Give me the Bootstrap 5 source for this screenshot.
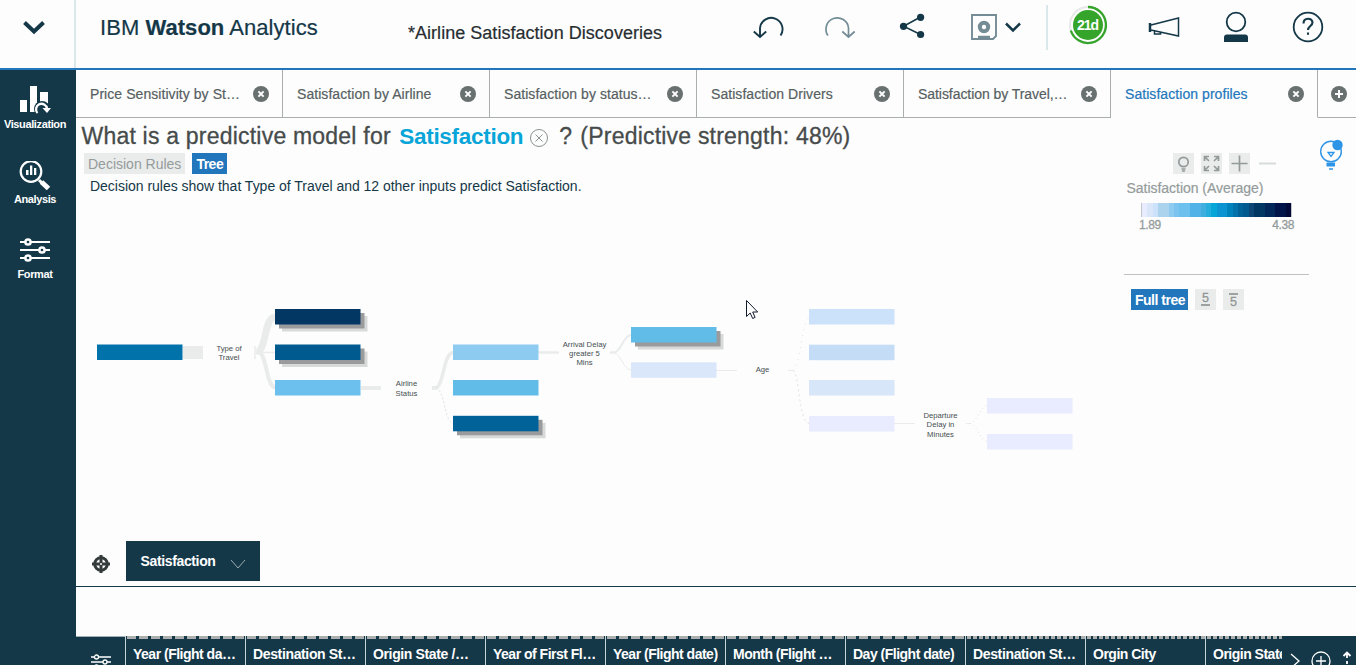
<!DOCTYPE html>
<html lang="en">
<head>
<meta charset="utf-8">
<meta name="viewport" content="width=device-width, initial-scale=1">
<title>IBM Watson Analytics</title>
<link rel="stylesheet" href="https://cdn.jsdelivr.net/npm/bootstrap@5.3.0/dist/css/bootstrap.min.css">
<style>
  :root { --navy:#153848; --blue:#2276bc; --paper:#fdfdfd; --soft:#eaeceb; --mute:#949b9b; }
  body { font-family:"Liberation Sans",Arial,sans-serif; background:var(--paper); color:var(--navy); width:1356px; height:665px; line-height:1; }
  svg { display:block; flex:none; }
  span, h1, p { white-space:pre; }
  .topbar { height:70px; border-bottom:2px solid #2276bc; }
  .toggle { width:76px; border-right:2px solid #dae7e8; }
  .brand { font-size:22px; padding:17px 0 0 24px; width:332px; letter-spacing:.05px; -webkit-text-stroke:.2px; }
  .docname { font-size:18px; color:#272d31; padding-top:24px; width:345px; letter-spacing:.03px; -webkit-text-stroke:.2px; }
  .side { width:76px; background:var(--navy); color:#fff; }
  .side a { height:75px; width:70px; color:#fff; font-size:11px; font-weight:700; letter-spacing:-.38px; text-decoration:none; }
  .side span { margin-top:3px; }
  .tabs { height:48px; }
  .tab { width:207px; border-right:1px solid #a9adad; border-bottom:1px solid #a9adad; padding:0 13px 0 14px; font-size:14px; letter-spacing:.06px; color:#575f62; -webkit-text-stroke:.2px; }
  .tab.on { color:var(--blue); border-bottom-color:transparent; }
  .tabadd { border-bottom:1px solid #a9adad; padding-left:13px; }
  .stage { height:469px; border-bottom:1px solid var(--navy); }
  .heading { font-size:23px; color:#464b4b; margin:0; height:35px; padding:5px 0 0 5.5px; letter-spacing:.21px; -webkit-text-stroke:.3px; }
  .target { color:#08a5d8; font-weight:700; font-size:22.5px; letter-spacing:-.29px; margin-left:8.500px; -webkit-text-stroke:0; }
  .chip { height:21px; background:var(--soft); color:var(--mute); font-size:14px; }
  .chip.on { background:var(--blue); color:#fff; font-weight:700; letter-spacing:-.5px; }
  .summary { font-size:14px; height:14px; margin:5px 0 0 14px; letter-spacing:-.02px; }
  .leftcol { width:1048px; }
  .legend { width:185px; padding-top:35px; }
  .cap { font-size:14px; color:var(--mute); margin:7px 0 7px 2.500px; height:15px; line-height:15px; letter-spacing:-.03px; -webkit-text-stroke:.2px; }
  .ramp { width:151px; height:14px; margin-left:17px; border:0 solid #c3c6c8; border-width:0 1px; }
  .ramp i { flex:1; }
  .ends { font-size:12px; color:var(--mute); margin:2px 15px 0 15px; letter-spacing:-.4px; -webkit-text-stroke:.3px; }
  .rule { border-top:1px solid #bfc2c2; margin-top:43px; }
  .fit { background:var(--navy); color:#fff; width:134px; height:40px; font-size:14px; font-weight:700; padding:0 14px 0 14.5px; letter-spacing:-.36px; }
  .tree { margin-top:97px; }
  .tree text { font-size:7.700px; fill:#464f50; text-anchor:middle; }
  .tray { background:var(--navy); height:29px; margin-top:49px; overflow:hidden; color:#fff; }
  .cfg { width:49px; padding:17px 0 0 15px; border-top:1px solid #9fb0b6; }
  .cols { width:1157px; }
  .dcol { width:120px; flex:none; border-left:1px solid #c7d4d8; font-size:14px; letter-spacing:-.5px; font-weight:700; padding-left:7px; line-height:37px; background:repeating-linear-gradient(90deg,#acafae 0 9px,transparent 9px 12px) 1px 0/118px 3px no-repeat; }
  .dcol.loose { letter-spacing:-.36px; }
  .dcol.fine { background-image:repeating-linear-gradient(90deg,#acafae 0 4px,transparent 4px 6px); }
  .pointer { position:absolute; left:746px; top:300px; }
</style>
</head>
<body class="d-flex flex-column overflow-hidden position-relative">
<header class="topbar d-flex flex-shrink-0">
  <div class="toggle"><svg width="74" height="68" fill="none" stroke="#153848" stroke-width="4"><path d="M24.500 22.500 34 31.500 43.500 22.500"/></svg></div>
  <div class="brand"><span>IBM <b>Watson</b> Analytics</span></div>
  <div class="docname"><span>*Airline Satisfaction Discoveries</span></div>
  <svg width="603" height="68" viewBox="753 0 603 68" fill="none" stroke="#153848" stroke-width="1.900">
    <path d="M760 36.500V28A11.300 11.300 0 1 1 780.600 35.500M753.800 31.500l6.200 5.500 6.200-5.500"/>
    <path stroke="#748c96" stroke-width="1.700" d="M848.500 36.500V28A11.300 11.300 0 1 0 827.900 35.500M842.300 31.500l6.200 5.500 6.200-5.500"/>
    <path stroke-width="1.500" d="M920.500 17 903.500 26.300 920.500 34.500"/><g fill="#153848" stroke="none"><circle cx="920.600" cy="17.300" r="3.600"/><circle cx="903.500" cy="26.300" r="3.600"/><circle cx="920.600" cy="34.500" r="3.600"/></g>
    <path stroke="#748c96" d="M972 15h24v21l-3 3h-21z"/><circle cx="984" cy="27" r="4.200" stroke="#748c96" stroke-width="4"/><path stroke="#748c96" d="M978 37h12" stroke-width="2.500"/>
    <path stroke-width="2.500" d="M1006 23.500 1013 30.500 1020 23.500"/>
    <path stroke="#dae7e8" d="M1047 5v45"/>
    <circle cx="1088" cy="25" r="18" stroke="#e6e9e8"/><path stroke="#34a52a" stroke-width="2.300" d="M1088 7a18 18 0 1 1-17.200 23.500"/><circle cx="1088" cy="25" r="15" fill="#34a52a" stroke="none"/>
    <text x="1088" y="30" text-anchor="middle" textLength="22" font-size="14" font-weight="700" fill="#fff" stroke="none">21d</text>
    <path stroke-width="1.500" d="M1151 25 1178.500 18v18L1151 30M1154.500 30v4h6v-2.500"/><path d="M1150 23v9" stroke-width="2.500"/>
    <circle cx="1236" cy="22" r="9.300" stroke-width="1.800"/><path fill="#153848" stroke="none" d="M1224 42v-4.500q0-3 3-3h18q3 0 3 3V42z"/>
    <circle cx="1308" cy="27" r="14.300" stroke-width="1.800"/><path d="M1303.500 23.500c0-6.500 9-6 9-1 0 3.500-4.500 3.500-4.500 7.500M1308 32.500v2.300" stroke-width="2.100"/>
  </svg>
</header>
<div class="d-flex flex-grow-1">
  <nav class="side flex-shrink-0 pt-3">
    <a class="d-flex flex-column align-items-center" href="#"><svg width="34" height="30" viewBox="0 0 34 30"><path fill="#fff" d="M2 14h7v12H2zM12 0h7v26h-7zM22 6h8v12h-8z"/><circle cx="24" cy="23" r="8" fill="#153848"/><path fill="none" stroke="#fff" stroke-width="2.300" d="M19.500 27a5.500 5.500 0 1 1 9.500-4.500"/><path fill="#fff" d="M24.500 22h8.500l-4 5z"/></svg><span>Visualization</span></a>
    <a class="d-flex flex-column align-items-center" href="#"><svg width="34" height="30" viewBox="0 0 34 30"><circle cx="13" cy="10.500" r="10.300" fill="none" stroke="#fff" stroke-width="2.200"/><path d="M8 9h2.500v5H8zM12 4.500h2.300V14H12zM16 7h2.300v7H16z" fill="#fff"/><path d="m21 19 3 3" stroke="#fff" stroke-width="3"/><path d="m23.500 21 7 6.500" stroke="#fff" stroke-width="5"/></svg><span>Analysis</span></a>
    <a class="d-flex flex-column align-items-center" href="#"><svg width="32" height="30" viewBox="0 0 32 30" stroke="#fff" stroke-width="2" fill="#153848"><path d="M1 6h30M1 14h30M1 22h30"/><circle cx="9" cy="6" r="2.600" stroke-width="2.500"/><circle cx="23" cy="14" r="2.600" stroke-width="2.500"/><circle cx="9" cy="22" r="2.600" stroke-width="2.500"/></svg><span>Format</span></a>
  </nav>
  <main class="flex-grow-1 d-flex flex-column">
    <div class="tabs d-flex">
      <div class="tab d-flex align-items-center justify-content-between"><span>Price Sensitivity by St…</span><svg width="16" height="16"><use href="#x"/></svg></div>
      <div class="tab d-flex align-items-center justify-content-between"><span>Satisfaction by Airline</span><svg width="16" height="16"><use href="#x"/></svg></div>
      <div class="tab d-flex align-items-center justify-content-between"><span>Satisfaction by status…</span><svg width="16" height="16"><use href="#x"/></svg></div>
      <div class="tab d-flex align-items-center justify-content-between"><span>Satisfaction Drivers</span><svg width="16" height="16"><use href="#x"/></svg></div>
      <div class="tab d-flex align-items-center justify-content-between" style="letter-spacing:-.06px"><span>Satisfaction by Travel,…</span><svg width="16" height="16"><use href="#x"/></svg></div>
      <div class="tab on d-flex align-items-center justify-content-between"><span>Satisfaction profiles</span><svg width="16" height="16"><use href="#x"/></svg></div>
      <div class="tabadd flex-grow-1 d-flex align-items-center"><svg width="16" height="16"><circle cx="8" cy="8" r="8" fill="#687070"/><path d="M4 8h8M8 4v8" stroke="#fff" stroke-width="2"/></svg></div>
    </div>
    <section class="stage d-flex">
      <div class="leftcol d-flex flex-column">
        <h1 class="heading d-flex"><span>What is a predictive model for</span><span class="target">Satisfaction</span><svg width="20" height="20" style="margin:5px 10px 0 6px" viewBox="0 0 20 20" fill="none" stroke="#8a9090"><circle cx="10" cy="10" r="8.500"/><path d="m6.500 6.500 7 7m0-7-7 7"/></svg><span>?</span><span style="margin-left:8px">(Predictive strength: 48%)</span></h1>
        <div class="d-flex ps-2"><span class="chip d-flex align-items-center px-1">Decision Rules</span><span class="chip on d-flex align-items-center px-1" style="margin-left:7px;width:35px">Tree</span></div>
        <p class="summary">Decision rules show that Type of Travel and 12 other inputs predict Satisfaction.</p>
        <svg class="tree" width="1034" height="170" viewBox="76 290 1034 170">
          <g fill="none" stroke="#eaeceb">
            <path d="M183 352.500h20" stroke-width="13"/><path d="M255 346v13M257 352.500h18" stroke-width="1.500"/><path d="M256 352.500h4" stroke-width="4"/>
            <path d="M258 352c9-6 6-34 17-35" stroke-width="7"/><path d="M259 352c8 3 7 34 16 35.500" stroke-width="4"/>
            <path d="M361 388h20M432 388h4" stroke-width="4"/><path d="M435 388c9 0 8-35 18-35.500" stroke-width="3.500"/>
            <path stroke="#dfe2e1" d="M436 388c9 2 8 33 17 35.500" stroke-dasharray="2"/>
            <path d="M538 352.500h21M610 352.500h4" stroke-width="2.500"/><path d="M614 352.500c7 0 9-17 17-17.500" stroke-width="2"/><path d="M614 352.500c7 2 9 16 17 17.500M716 370.500h21M788 370.500h5"/>
            <path stroke="#dfe2e1" d="M793 370.500c7-4 9-48 16-53" stroke-dasharray="1 5"/><path stroke="#dfe2e1" d="M793 370.500c7 4 5 50 16 53" stroke-dasharray="2 3"/><path d="M894 423.500h21M966 423.500h4"/>
            <path stroke="#dfe2e1" d="M970 423.500c7-1 9-15 17-18M970 423.500c7 1 9 15 17 18" stroke-dasharray="1 3"/>
          </g>
          <g id="bars"></g>
          <g><text x="229" y="351">Type of</text><text x="229" y="360">Travel</text><text x="406.500" y="386">Airline</text><text x="406.500" y="396">Status</text>
          <text x="584.500" y="347">Arrival Delay</text><text x="584.500" y="356">greater 5</text><text x="584.500" y="365">Mins</text><text x="762.500" y="372">Age</text>
          <text x="940.500" y="418">Departure</text><text x="940.500" y="427">Delay in</text><text x="940.500" y="437">Minutes</text></g>
        </svg>
        <div class="d-flex mt-auto" style="margin-bottom:5px">
          <svg width="20" height="20" viewBox="0 0 20 20" style="margin:13px 15px 0 15px"><circle cx="10" cy="10" r="6.300" fill="none" stroke="#343b3c" stroke-width="3"/><path d="M10 1v18M1 10h18" stroke="#343b3c" stroke-width="3"/><circle cx="10" cy="10" r="1" fill="#fff"/></svg>
          <div class="fit d-flex align-items-center justify-content-between"><span>Satisfaction</span><svg width="16" height="10" style="margin-top:6px" fill="none" stroke="#9cabb2"><path d="m1 1 7 8 7-8"/></svg></div>
        </div>
      </div>
      <aside class="legend">
        <div class="d-flex" style="gap:7px;margin-left:49px">
          <span class="chip"><svg width="21" height="21" fill="none" stroke="#949a9a" stroke-width="1.700"><circle cx="10.500" cy="9" r="4.700"/><path d="M8.500 16h4M9 18h3"/></svg></span>
          <span class="chip"><svg width="21" height="21" fill="none" stroke="#949a9a" stroke-width="1.700"><path d="M3.500 8V3.500H8M4 4l4 4M13 3.500h4.500V8M17 4l-4 4M3.500 13v4.500H8M4 17l4-4M13 17.500h4.500V13M17 17l-4-4"/></svg></span>
          <span class="chip"><svg width="21" height="21" stroke="#949a9a" stroke-width="1.700"><path d="M2.500 10.500h16M10.500 2.500v16"/></svg></span>
          <svg width="21" height="21" stroke="#d8dbdb" stroke-width="2"><path d="M2 10.500h17"/></svg>
        </div>
        <div class="cap"><span>Satisfaction (Average)</span></div>
        <div class="ramp d-flex" id="ramp"></div>
        <div class="ends d-flex justify-content-between"><span>1.89</span><span>4.38</span></div>
        <div class="rule"></div>
        <div class="d-flex" style="margin:14px 0 0 7px;gap:7px"><span class="chip on d-flex align-items-center px-1" style="width:57px">Full tree</span>
          <span class="chip"><svg width="21" height="21"><text x="10.500" y="13" font-size="12.500" text-anchor="middle" fill="#8f9595" stroke="#8f9595" stroke-width=".3">5</text><path d="M6 16h9" stroke="#8f9595" stroke-width="1.700"/></svg></span>
          <span class="chip"><svg width="21" height="21"><text x="10.500" y="16.500" font-size="12.500" text-anchor="middle" fill="#8f9595" stroke="#8f9595" stroke-width=".3">5</text><path d="M6 5h9" stroke="#8f9595" stroke-width="1.700"/></svg></span></div>
      </aside>
      <svg width="26" height="34" viewBox="0 0 26 34" style="margin:20px 0 0 10px" fill="none" stroke="#2e94e6"><circle cx="12" cy="13.500" r="10.300" stroke-width="1.400"/><path d="M9 14.500h6l-3 4z" stroke-width="1.300"/><circle cx="18.500" cy="7" r="5.200" fill="#2e94e6" stroke="none"/><path d="M7.500 26.500h8.500" stroke-width="4"/><path d="M10 31h4" stroke-width="1.500"/></svg>
    </section>
    <div class="tray d-flex">
      <div class="cfg"><svg width="20" height="16" viewBox="0 0 20 16" fill="#153848" stroke="#fff" stroke-width="1.300"><path d="M0 3h20M0 8h20M0 13h20"/><circle cx="5.500" cy="3" r="2"/><circle cx="14" cy="8" r="2"/><circle cx="5.500" cy="13" r="2"/></svg></div>
      <div class="cols d-flex overflow-hidden">
        <div class="dcol"><span>Year (Flight da…</span></div><div class="dcol loose"><span>Destination St…</span></div><div class="dcol loose"><span>Origin State /…</span></div><div class="dcol"><span>Year of First Fl…</span></div><div class="dcol"><span>Year (Flight date)</span></div><div class="dcol"><span>Month (Flight …</span></div><div class="dcol"><span>Day (Flight date)</span></div><div class="dcol fine loose"><span>Destination St…</span></div><div class="dcol fine"><span>Orgin City</span></div><div class="dcol fine"><span>Origin State</span></div>
      </div>
      <svg width="74" height="29" fill="none" stroke="#fff" stroke-width="1.300"><path d="m9 18 8 7-8 7"/><circle cx="39" cy="25" r="9"/><path d="M34 25h10M39 20v10"/><path d="m61.500 20 3.500-3.500 3.500 3.500M65 17v5M65 25v3" stroke-width="1.800"/></svg>
    </div>
  </main>
</div>
<svg class="pointer" width="14" height="20" viewBox="0 0 14 20"><path d="M.5.5v16l3.700-3.500 2.500 5.500 2.400-1.100-2.400-5.400h5z" fill="#fff" stroke="#111a2c"/></svg>
<svg width="0" height="0" class="position-absolute"><symbol id="x" viewBox="0 0 16 16"><circle cx="8" cy="8" r="8" fill="#687070"/><path d="m5.400 5.400 5.200 5.200m0-5.200-5.200 5.200" stroke="#fff" stroke-width="2"/></symbol></svg>
<script src="https://cdn.jsdelivr.net/npm/bootstrap@5.3.0/dist/js/bootstrap.bundle.min.js"></script>
<script>
  // x, y, fill, highlighted
  const nodes = [[97,344.500,'#0272ab'],[275,309,'#023663',1],[275,344.500,'#015a8f',1],[275,380,'#6cc0ed'],[453,344.500,'#8dcbf1'],[453,380,'#62bce8'],[453,415.800,'#006298',1],[631,327,'#62bce8',1],[631,362.300,'#dae7fb'],[809,309,'#cbe2fa'],[809,344.700,'#c4dcf5'],[809,380,'#d8e6fa'],[809,416,'#e8ecfe'],[987,398,'#e8ecfe'],[987,434,'#e8ecfe']];
  const box = (x,y,f,h=15.500) => `<rect x="${x}" y="${y}" width="85.500" height="${h}" fill="${f}"/>`;
  document.getElementById('bars').innerHTML = nodes.map(([x,y,f,s]) => (s ? box(x+7,y+7,'#d8dada') + box(x+4,y+4,'#999b9c') : '') + box(x,y,f)).join('');
  const ramp = ['#e8ecfe','#dae7fb','#cbe2fa','#abd3ee','#abd3ee','#8dcbf1','#7ac4ef','#6cc0ed','#6cc0ed','#50b2e6','#50b2e6','#3fafe0','#27addc','#08a5d8','#0c94d2','#0c94d2','#0083bd','#0272ab','#006298','#015a8f','#0d4574','#023663','#023663','#01265a','#01265a','#00144a','#00144a','#000937'];
  document.getElementById('ramp').innerHTML = ramp.map(c => `<i style="background:${c}"></i>`).join('');
</script>
</body>
</html>
